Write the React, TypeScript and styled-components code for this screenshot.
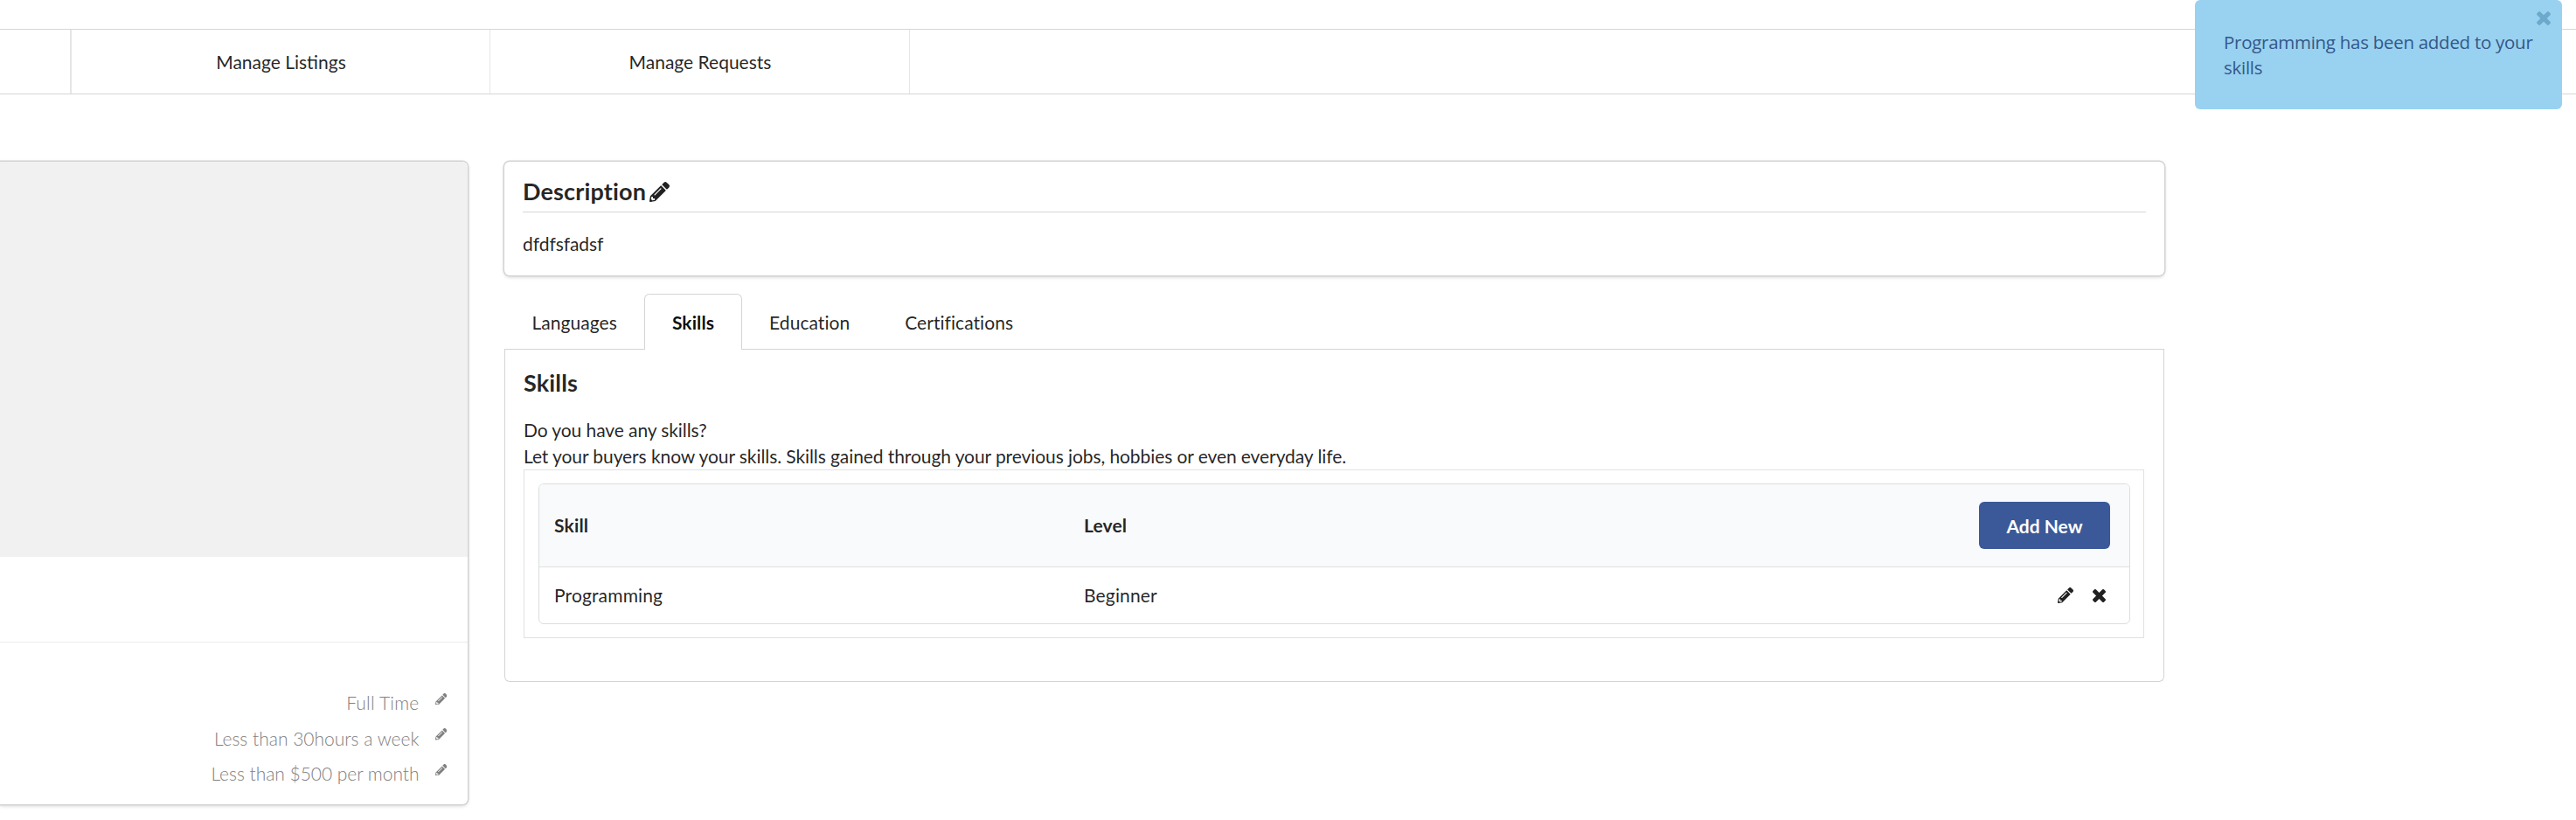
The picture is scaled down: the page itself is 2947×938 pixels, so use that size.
import React from "react";
import styled, { createGlobalStyle } from "styled-components";

const Global = createGlobalStyle`
  *, *::before, *::after { box-sizing: border-box; }
  html, body { margin: 0; height: 938px; overflow: hidden; background: #fff; }
  body {
    font: 21px/30px Lato, "Helvetica Neue", Arial, sans-serif;
    color: rgba(0, 0, 0, 0.87);
  }
`;

const Page = styled.div`
  position: relative;
  width: 2947px;
  height: 938px;
  padding-top: 33px;
  overflow: hidden;
`;

const NavBar = styled.nav`
  display: flex;
  height: 75px;
  border-top: 1px solid #d6d6d7;
  border-bottom: 1px solid #d6d6d7;
`;

const NavItem = styled.a<{ $width: number; $divider?: number }>`
  display: flex;
  align-items: center;
  justify-content: center;
  width: ${(p) => p.$width}px;
  padding: 1px 0 0 1px;
  border-right: ${(p) => p.$divider ?? 1}px solid #e6e6e6;
`;

const Columns = styled.main`
  display: flex;
  align-items: flex-start;
  gap: 42px;
  padding-top: 77px;
`;

const Card = styled.section`
  border-radius: 6px;
  background: #fff;
  box-shadow: 0 1.5px 4.5px 0 #d4d4d5, 0 0 0 1.5px #d4d4d5;
`;

const ProfileCard = styled(Card)`
  width: 535px;
  height: 735px;
  border-top-left-radius: 0;
  border-bottom-left-radius: 0;
  overflow: hidden;
`;

const Photo = styled.div`
  height: 452px;
  background: #f1f1f1;
`;

const ProfileName = styled.div`
  height: 98px;
  border-bottom: 1px solid #ececec;
`;

const Facts = styled.ul`
  list-style: none;
  margin: 0;
  padding: 54px 24px 0 0;
`;

const Fact = styled.li<{ $tracking: number }>`
  display: flex;
  justify-content: flex-end;
  gap: 18px;
  height: 40.5px;
  color: #808080;
  font-weight: 300;
  letter-spacing: ${(p) => p.$tracking}px;
`;

const FactIcon = styled.span`
  display: flex;
  padding-top: 3.5px;
`;

const Main = styled.div`
  width: 1899px;
`;

const DescriptionCard = styled(Card)`
  height: 130px;
  padding: 18px 21px 0;
`;

const Heading = styled.h3`
  display: flex;
  margin: 0;
  font-size: 27px;
  line-height: 32px;
  font-weight: 700;
  letter-spacing: 0.15px;
`;

const DescriptionHeading = styled(Heading)`
  gap: 4px;
  height: 40px;
  border-bottom: 1.5px solid #d6d6d7;
`;

const HeadingIcon = styled.span`
  display: flex;
  padding-top: 5px;
`;

const DescriptionText = styled.p`
  margin: 21px 0 0;
  letter-spacing: -0.05px;
`;

const Tabs = styled.div`
  display: flex;
  height: 64px;
  margin-top: 21px;
  border-bottom: 1px solid #d4d4d5;
`;

const Tab = styled.a<{ $active?: boolean }>`
  display: flex;
  align-items: center;
  height: 64px;
  padding: 2px ${(p) => (p.$active ? 30.5 : 31.5)}px 0;
  letter-spacing: ${(p) => (p.$active ? 0.1 : 0.05)}px;
  ${(p) =>
    p.$active &&
    `
    padding-top: 1px;
    border: 1px solid #d4d4d5;
    border-bottom: 0;
    border-radius: 6px 6px 0 0;
    background: #fff;
    color: rgba(0, 0, 0, 0.95);
    font-weight: 700;
  `}
`;

const Panel = styled.section`
  height: 380px;
  padding: 22px 21px 0;
  border: 1px solid #d4d4d5;
  border-top: 0;
  border-radius: 0 0 6px 6px;
`;

const Intro = styled.p`
  margin: 23px 0 0;
  letter-spacing: -0.085px;
`;

const Frame = styled.div`
  height: 193px;
  margin: 0 1px 0 0;
  padding: 15px 15px 0 16px;
  border: 1px solid #e0e1e2;
`;

const Table = styled.div`
  height: 161px;
  border: 1px solid #dcddde;
  border-radius: 6px;
  overflow: hidden;
`;

const Row = styled.div<{ $head?: boolean }>`
  display: grid;
  grid-template-columns: 606px 606px 1fr;
  align-items: center;
  height: ${(p) => (p.$head ? 95 : 64)}px;
  padding-left: 17px;
  padding-right: ${(p) => (p.$head ? 22 : 27)}px;
  letter-spacing: 0.15px;
  ${(p) => p.$head && "background: #f9fafb; border-bottom: 1px solid #dfe0e1; font-weight: 700;"}
`;

const Actions = styled.div`
  display: flex;
  align-items: center;
  justify-content: flex-end;
  gap: 22px;
`;

const AddButton = styled.button`
  width: 150px;
  height: 54px;
  padding: 0;
  border: 0;
  border-radius: 6px;
  background: #3b5998;
  color: #fff;
  font: 700 21px/21px Lato, sans-serif;
`;

const Toast = styled.aside`
  position: absolute;
  top: 0;
  left: 2511px;
  width: 420px;
  height: 125px;
  padding: 34px 0 0 33px;
  border-radius: 6px;
  background: #99d2f0;
  color: #34578a;
  font: 20.5px/29px "Open Sans", "Noto Sans", sans-serif;
  letter-spacing: -0.28px;
  white-space: nowrap;
`;

const ToastClose = styled.span`
  position: absolute;
  top: 13px;
  right: 13px;
  display: flex;
`;

const Pencil = ({ size }: { size: number }) => (
  <svg width={size} height={size} viewBox="0 0 512 512" fill="currentColor">
    <path d="M497.9 142.1l-46.1 46.1c-4.7 4.7-12.3 4.7-17 0l-111-111c-4.7-4.7-4.7-12.3 0-17l46.1-46.1c18.7-18.7 49.1-18.7 67.9 0l60.1 60.1c18.8 18.7 18.8 49.1 0 67.9zM284.2 99.8L21.6 362.4.4 483.9c-2.9 16.4 11.4 30.6 27.8 27.8l121.5-21.3 262.6-262.6c4.7-4.7 4.7-12.3 0-17l-111-111c-4.8-4.7-12.4-4.7-17.1 0zM124.1 339.9c-5.5-5.5-5.5-14.3 0-19.8l154-154c5.5-5.5 14.3-5.5 19.8 0s5.5 14.3 0 19.8l-154 154c-5.5 5.5-14.3 5.5-19.8 0zM88 424h48v36.3l-64.5 11.3-31.1-31.1L51.7 376H88v48z" />
  </svg>
);

const Cross = ({ size, color = "currentColor" }: { size: number; color?: string }) => (
  <svg width={size} height={size} viewBox="110 302 1188 1188" fill={color}>
    <path d="M1298 1258q0 40-28 68l-136 136q-28 28-68 28t-68-28l-294-294-294 294q-28 28-68 28t-68-28l-136-136q-28-28-28-68t28-68l294-294-294-294q-28-28-28-68t28-68l136-136q28-28 68-28t68 28l294 294 294-294q28-28 68-28t68 28l136 136q28 28 28 68t-28 68l-294 294 294 294q28 28 28 68z" />
  </svg>
);

const facts = [
  { text: "Full Time", tracking: 0.2 },
  { text: "Less than 30hours a week", tracking: 0 },
  { text: "Less than $500 per month", tracking: -0.03 },
];

export default function App() {
  return (
    <Page>
      <Global />
      <NavBar>
        <NavItem $width={82} $divider={2} />
        <NavItem $width={479}>Manage Listings</NavItem>
        <NavItem $width={480}>Manage Requests</NavItem>
      </NavBar>
      <Columns>
        <ProfileCard>
          <Photo />
          <ProfileName />
          <Facts>
            {facts.map((fact) => (
              <Fact key={fact.text} $tracking={fact.tracking}>
                {fact.text}
                <FactIcon>
                  <Pencil size={13.5} />
                </FactIcon>
              </Fact>
            ))}
          </Facts>
        </ProfileCard>
        <Main>
          <DescriptionCard>
            <DescriptionHeading>
              Description
              <HeadingIcon>
                <Pencil size={23} />
              </HeadingIcon>
            </DescriptionHeading>
            <DescriptionText>dfdfsfadsf</DescriptionText>
          </DescriptionCard>
          <Tabs>
            <Tab>Languages</Tab>
            <Tab $active>Skills</Tab>
            <Tab>Education</Tab>
            <Tab>Certifications</Tab>
          </Tabs>
          <Panel>
            <Heading>Skills</Heading>
            <Intro>
              Do you have any skills?
              <br />
              Let your buyers know your skills. Skills gained through your previous jobs, hobbies or even everyday life.
            </Intro>
            <Frame>
              <Table>
                <Row $head>
                  <span>Skill</span>
                  <span>Level</span>
                  <Actions>
                    <AddButton>Add New</AddButton>
                  </Actions>
                </Row>
                <Row>
                  <span>Programming</span>
                  <span>Beginner</span>
                  <Actions>
                    <Pencil size={18} />
                    <Cross size={15} />
                  </Actions>
                </Row>
              </Table>
            </Frame>
          </Panel>
        </Main>
      </Columns>
      <Toast>
        Programming has been added to your
        <br />
        skills
        <ToastClose>
          <Cross size={16} color="#6ca9cb" />
        </ToastClose>
      </Toast>
    </Page>
  );
}
